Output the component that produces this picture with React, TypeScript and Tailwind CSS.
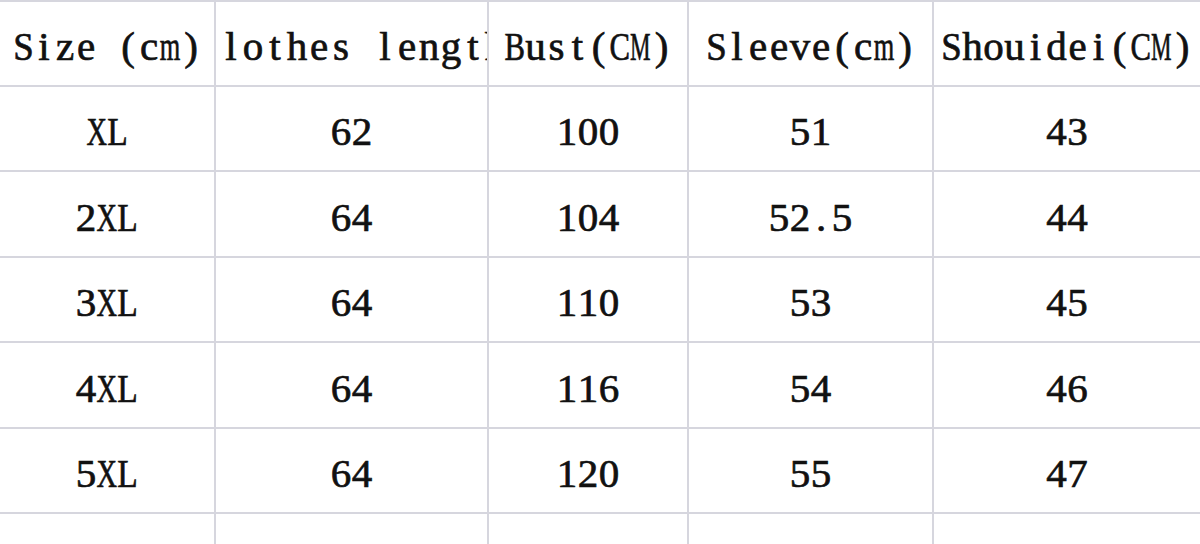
const headers = ["Size (cm)", "lothes length", "Bust(CM)", "Sleeve(cm)", "Shouidei(CM)"];

const rows = [
  ["XL", "62", "100", "51", "43"],
  ["2XL", "64", "104", "52.5", "44"],
  ["3XL", "64", "110", "53", "45"],
  ["4XL", "64", "116", "54", "46"],
  ["5XL", "64", "120", "55", "47"],
  ["", "", "", "", ""],
];

// glyph widths (em) of Liberation Serif that overflow a half-em cell
const wide: Record<string, number> = {
  S: 0.556, C: 0.667, M: 0.889, X: 0.722, L: 0.611, B: 0.667, m: 0.778,
};

// the sheet uses a half-width monospaced serif, so every character sits in its own cell
function Mono({ text, cell = 21 }: { text: string; cell?: number }) {
  return (
    <span className="inline-flex shrink-0 whitespace-pre leading-none text-[41px] text-[#111] [-webkit-text-stroke:0.7px_#111]">
      {text.split("").map((ch, i) => {
        const w = wide[ch];
        const s = w ? Math.min(1, 0.5 / w) : 1;
        return (
          <span key={i} className="inline-flex shrink-0 justify-center" style={{ width: cell }}>
            <span className="inline-block" style={{ transform: `scaleX(${s})` }}>
              {ch === " " ? "\u00a0" : ch}
            </span>
          </span>
        );
      })}
    </span>
  );
}

export default function App() {
  return (
    <div
      className="w-[1200px] h-[544px] overflow-hidden bg-[#d6d6de] pt-[2px]"
      style={{ fontFamily: '"Liberation Serif", "Times New Roman", serif' }}
    >
      <div className="grid grid-cols-[214px_271px_198px_243px_266px] grid-rows-[83px_83px_84px_83px_84px_83px_60px] gap-[2px]">
        {headers.map((h, i) => (
          <div
            key={i}
            className={`bg-white flex items-center pt-[6px] overflow-hidden ${i === 1 ? "justify-start pl-[4px]" : "justify-center"}`}
          >
            {i === 1 ? <Mono text={h} cell={22} /> : <Mono text={h} />}
          </div>
        ))}
        {rows.map((r, ri) =>
          r.map((c, ci) => (
            <div key={`${ri}-${ci}`} className="bg-white flex items-center justify-center pt-[6px]">
              <Mono text={c} />
            </div>
          ))
        )}
      </div>
    </div>
  );
}
